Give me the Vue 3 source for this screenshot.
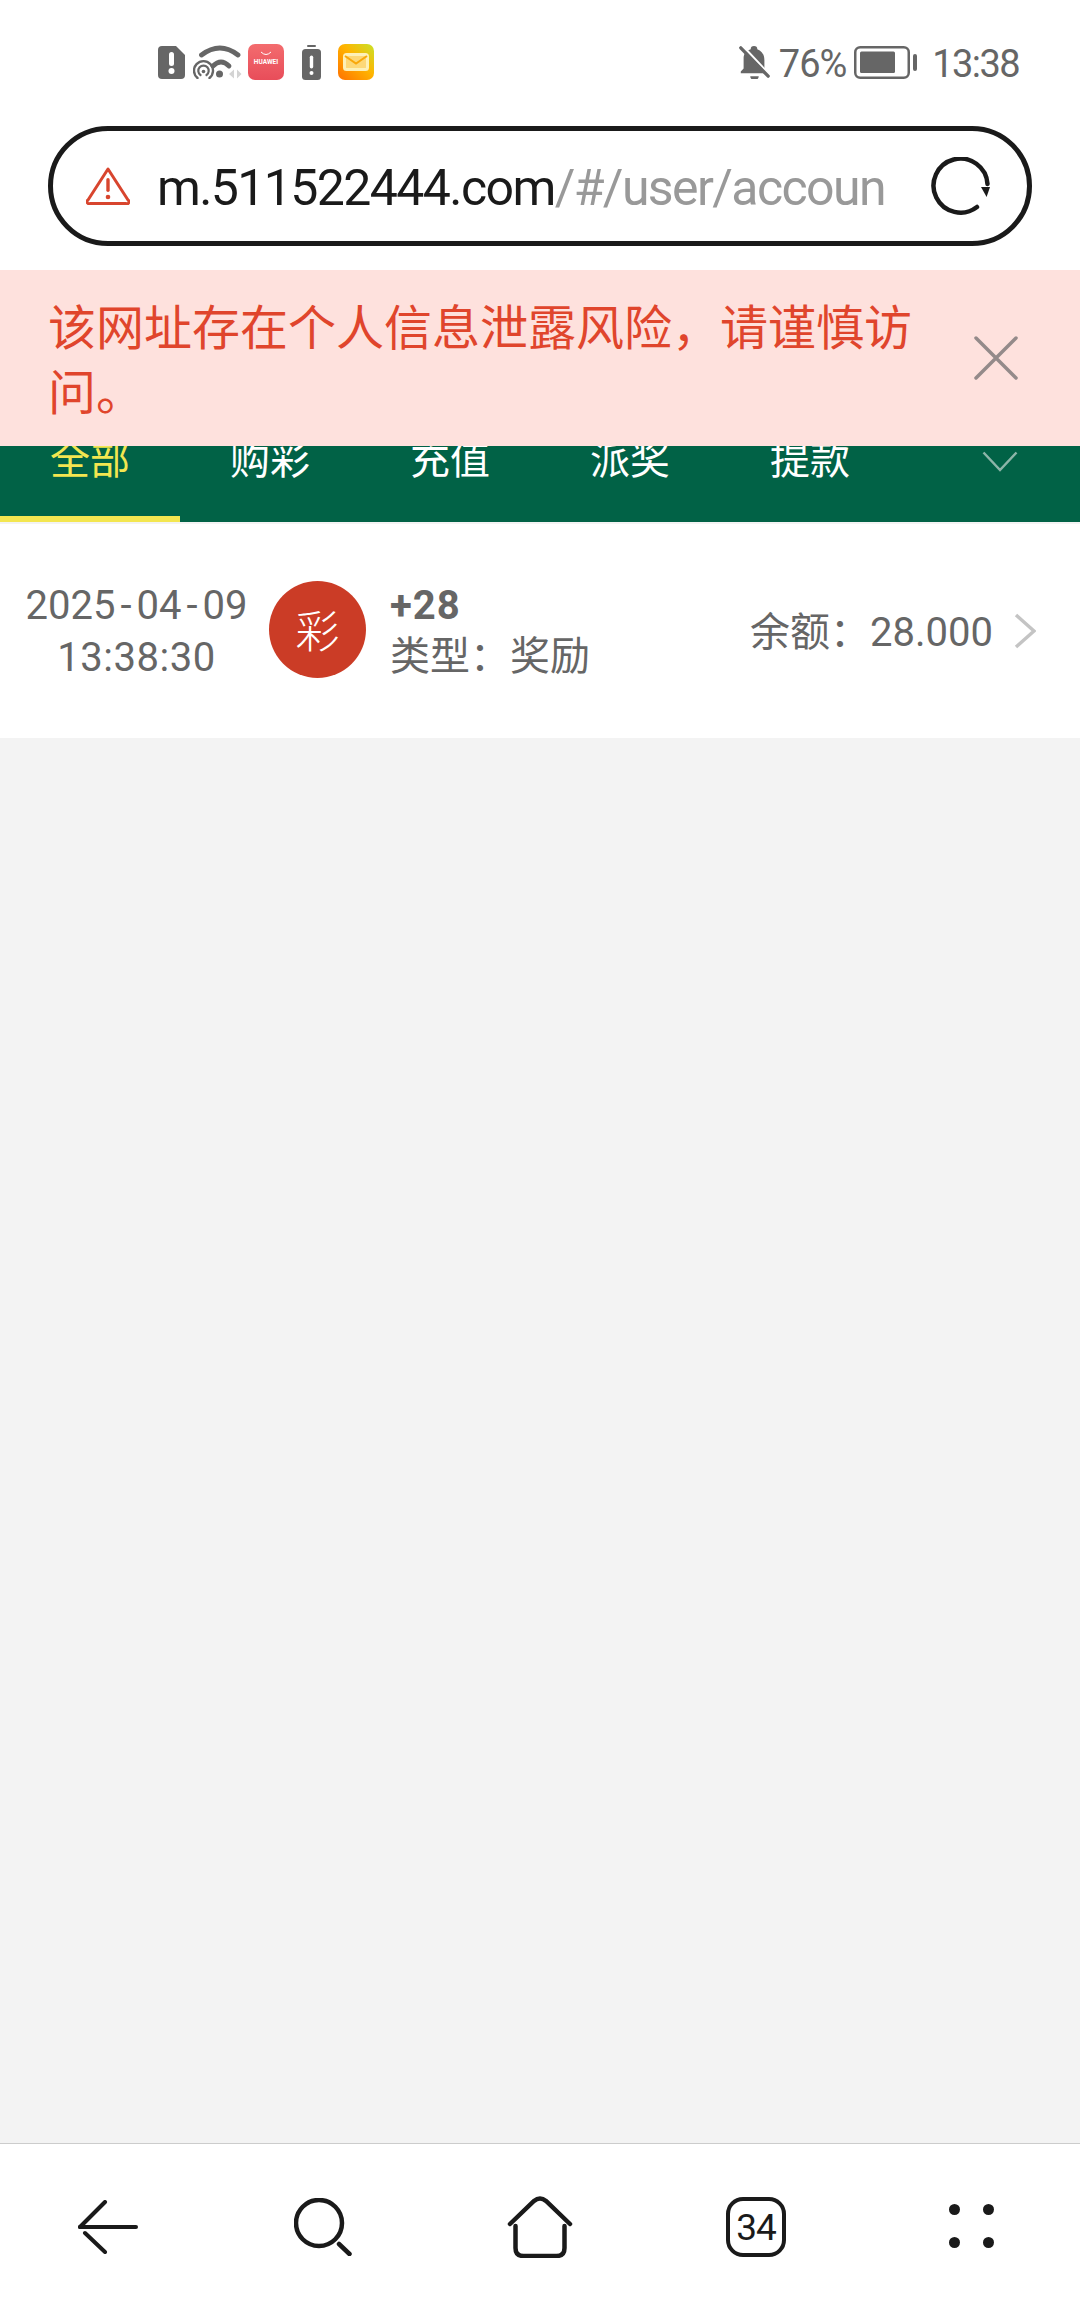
<template>
  <div class="phone">
    <header class="status-bar">
      <div class="status-left">
        <svg class="ic-sim" viewBox="0 0 27 33" width="27" height="33">
          <path d="M4 0H18L27 9V29a4 4 0 0 1-4 4H4a4 4 0 0 1-4-4V4a4 4 0 0 1 4-4Z" fill="#666" />
          <rect x="11" y="6" width="5" height="14" rx="2.5" fill="#fff" />
          <circle cx="13.500" cy="25" r="3" fill="#fff" />
        </svg>
        <svg class="ic-wifi" viewBox="0 0 49 34" width="49" height="34">
          <g fill="none" stroke="#666" stroke-linecap="round">
            <path d="M8.500 10Q27 -4 45 10" stroke-width="4.800" />
            <path d="M20 21Q28 13 36 21" stroke-width="4.800" />
            <path d="M4.500 33A9.500 9.500 0 1 1 16.500 33" stroke-width="2.400" />
            <path d="M7.500 30A5.200 5.200 0 1 1 13.500 30" stroke-width="2.200" />
          </g>
          <circle cx="10.500" cy="26.500" r="1.800" fill="#666" />
          <circle cx="26.500" cy="29" r="3.500" fill="#666" />
          <path d="M36 29L41 24.500V33.500ZM44 24.500L48.500 29L44 33.500Z" fill="#d4d4d4" />
        </svg>
        <div class="ic-huawei">
          <svg viewBox="0 0 12 6" width="12" height="6">
            <path d="M1 1Q6 6 11 1" fill="none" stroke="#fff" stroke-width="1" />
          </svg>
          <span>HUAWEI</span>
        </div>
        <svg class="ic-batt" viewBox="0 0 19 35" width="19" height="35">
          <rect x="5" y="0" width="9" height="2" rx="1" fill="#666" />
          <rect x="0" y="4" width="19" height="31" rx="3.500" fill="#666" />
          <rect x="7.800" y="10.500" width="3.400" height="13" rx="1.700" fill="#fff" />
          <circle cx="9.500" cy="28" r="2" fill="#fff" />
        </svg>
        <div class="ic-mail">
          <svg viewBox="0 0 26 18" width="26" height="18">
            <rect x="1.500" y="1.500" width="23" height="15" rx="2" fill="#fdd878" stroke="#fdf0b8" stroke-width="3" />
            <path d="M2 3L13 10.500L24 3" fill="none" stroke="#f9a70a" stroke-width="2" />
          </svg>
        </div>
      </div>
      <div class="status-right">
        <svg class="ic-bell" viewBox="0 0 32 36" width="32" height="34">
          <path d="M16 1a3.500 3.500 0 0 1 3.500 3.500c5 2 7.500 6 7.500 11.500v9l3 3v2H2v-2l3-3V14c0-4 2-8 7.500-9.500A3.500 3.500 0 0 1 16 1Z" fill="#666" />
          <path d="M12 33h9a4.500 4.500 0 0 1-9 0Z" fill="#666" />
          <path d="M3 0L33 32" stroke="#fff" stroke-width="2.500" />
          <path d="M2 3L31 33" stroke="#666" stroke-width="3.500" stroke-linecap="round" />
        </svg>
        <span class="pct">76%</span>
        <svg class="ic-battery" viewBox="0 0 63 33" width="63" height="33">
          <rect x="1.250" y="1.250" width="53.500" height="30.500" rx="5" fill="none" stroke="#666" stroke-width="2.500" />
          <rect x="6" y="5.500" width="35" height="21.500" rx="1.500" fill="#666" />
          <rect x="59" y="8" width="4" height="17" rx="2" fill="#666" />
        </svg>
        <span class="clock">13:38</span>
      </div>
    </header>

    <div class="address-bar">
      <svg class="ic-warn" viewBox="0 0 44 38" width="44" height="38">
        <path d="M22 2L42 33a2 2 0 0 1-2 3.500H4a2 2 0 0 1-2-3.500Z" fill="none" stroke="#d8452e" stroke-width="3" stroke-linejoin="round" />
        <rect x="20.300" y="11" width="3.400" height="14" rx="1.700" fill="#d8452e" />
        <circle cx="22" cy="30" r="2.300" fill="#d8452e" />
      </svg>
      <div class="url"><span class="host">m.511522444.com</span><span class="path">/#/user/accoun</span></div>
      <svg class="ic-reload" viewBox="0 0 60 58" width="60" height="58">
        <path d="M46 50A27 27 0 1 1 56.500 27" fill="none" stroke="#1a1a1a" stroke-width="4.500" stroke-linecap="round" />
        <path d="M50 30H59L55.600 40Z" fill="#1a1a1a" />
      </svg>
    </div>

    <main class="content">
      <div class="banner">
        <p class="banner-text">该网址存在个人信息泄露风险，请谨慎访问。</p>
        <svg class="ic-close" viewBox="0 0 44 44" width="44" height="44">
          <path d="M2 2L42 42M42 2L2 42" stroke="#948a8a" stroke-width="3.500" stroke-linecap="round" />
        </svg>
      </div>

      <nav class="tabs">
        <div v-for="(tab, i) in tabs" :key="tab" class="tab" :class="{ active: i === 0 }">{{ tab }}</div>
        <div class="tab-more">
          <svg viewBox="0 0 36 21" width="36" height="21">
            <path d="M1.500 1.500L18 19L34.500 1.500" fill="none" stroke="#8cb5a8" stroke-width="2.500" />
          </svg>
        </div>
      </nav>

      <section class="record">
        <div class="when">
          <div>2025<span class="dash">-</span>04<span class="dash">-</span>09</div>
          <div class="time">13:38:30</div>
        </div>
        <div class="badge">彩</div>
        <div class="detail">
          <div class="amount">+28</div>
          <div class="kind">类型：奖励</div>
        </div>
        <div class="balance">余额：28.000</div>
        <svg class="ic-next" viewBox="0 0 22 36" width="22" height="36">
          <path d="M2 2L20 18L2 34" fill="none" stroke="#c4c4c4" stroke-width="3.500" />
        </svg>
      </section>
    </main>

    <footer class="toolbar">
      <svg viewBox="0 0 60 54" width="60" height="54">
        <g fill="none" stroke="#1a1a1a" stroke-width="4" stroke-linecap="round">
          <path d="M2 27H58" />
          <path d="M2 27L27 2" />
          <path d="M7 33L27 52" />
        </g>
      </svg>
      <svg viewBox="0 0 60 58" width="60" height="58">
        <g fill="none" stroke="#1a1a1a" stroke-width="4.500" stroke-linecap="round">
          <circle cx="25" cy="25" r="23" />
          <path d="M45 46L55.500 56" />
        </g>
      </svg>
      <svg viewBox="0 0 66 62" width="66" height="62">
        <g fill="none" stroke="#1a1a1a" stroke-width="4.500" stroke-linecap="round">
          <path d="M3 28L27 5Q33 0 39 5L63 28" />
          <path d="M8.500 30V52Q8.500 60 16.500 60H49.500Q57.500 60 57.500 52V30" />
        </g>
      </svg>
      <div class="tab-count">34</div>
      <div class="dots">
        <i v-for="n in 4" :key="n"></i>
      </div>
    </footer>
  </div>
</template>

<script setup>
const tabs = ['全部', '购彩', '充值', '派奖', '提款']
</script>

<style>
body {
  background: #fff;
}
</style>

<style scoped>
.phone {
  width: 1080px;
  height: 2310px;
  display: flex;
  flex-direction: column;
  background: #fff;
  overflow: hidden;
  font-family: Roboto, "Noto Sans CJK SC", sans-serif;
}

.status-bar {
  height: 124px;
  flex: none;
  display: flex;
  align-items: center;
  justify-content: space-between;
  padding: 0 61px 0 158px;
  box-sizing: border-box;
}

.status-left,
.status-right {
  display: flex;
  align-items: center;
}

.ic-wifi {
  margin-left: 8px;
}

.ic-huawei {
  width: 36px;
  height: 36px;
  margin-left: 6px;
  border-radius: 7px;
  background: linear-gradient(180deg, #f36c6e, #e84d5a);
  display: flex;
  flex-direction: column;
  align-items: center;
  padding-top: 7px;
  box-sizing: border-box;
  color: #fff;
  font-size: 6.500px;
  font-weight: 700;
  line-height: 10px;
}

.ic-batt {
  margin-left: 18px;
}

.ic-mail {
  width: 36px;
  height: 36px;
  margin-left: 17px;
  border-radius: 7px;
  background: linear-gradient(45deg, #ff7d00 10%, #ffb400 55%, #c9e22a 100%);
  display: flex;
  align-items: center;
  justify-content: center;
}

.pct,
.clock {
  font-size: 38px;
  line-height: 44px;
  padding-top: 3px;
  color: #666;
}

.pct {
  margin-left: 9px;
  letter-spacing: -1px;
}

.ic-battery {
  margin-left: 8px;
}

.clock {
  margin-left: 15px;
  letter-spacing: -1.600px;
}

.address-bar {
  flex: none;
  height: 120px;
  margin: 2px 48px 24px;
  padding: 0 36px 0 33px;
  box-sizing: border-box;
  border: 5px solid #1a1a1a;
  border-radius: 60px;
  display: flex;
  align-items: center;
}

.url {
  margin-left: 27px;
  padding-top: 4px;
  white-space: nowrap;
  font-size: 50px;
  line-height: 60px;
  letter-spacing: -1.600px;
}

.host {
  color: #1a1a1a;
}

.path {
  color: #999;
}

.ic-reload {
  margin-left: auto;
}

.content {
  flex: 1;
  position: relative;
  background: #f3f3f3;
}

.banner {
  position: absolute;
  left: 0;
  right: 0;
  top: 0;
  height: 176px;
  background: #fee1dd;
  z-index: 2;
  display: flex;
  align-items: flex-start;
  padding: 26px 62px 0 48px;
  box-sizing: border-box;
}

.banner-text {
  margin: 0;
  width: 880px;
  font-size: 48px;
  line-height: 65px;
  color: #e0452c;
}

.ic-close {
  margin-left: auto;
  margin-top: 40px;
}

.tabs {
  height: 252px;
  background: #016246;
  display: flex;
  align-items: flex-end;
}

.tab {
  width: 180px;
  height: 100px;
  box-sizing: border-box;
  text-align: center;
  font-size: 40px;
  line-height: 46px;
  padding-top: 16px;
  color: #fff;
}

.tab.active {
  color: #f3e650;
  border-bottom: 6px solid #f3e650;
}

.tab-more {
  flex: 1;
  align-self: flex-start;
  display: flex;
  justify-content: flex-end;
  padding: 181px 62px 0 0;
}

.record {
  height: 214px;
  margin-top: 2px;
  padding-bottom: 2px;
  box-sizing: border-box;
  background: #fff;
  display: flex;
  align-items: center;
  color: #666;
  font-size: 40px;
}

.when {
  width: 273px;
  padding-top: 3px;
  text-align: center;
  line-height: 52px;
}

.dash {
  margin: 0 5px;
}

.time {
  letter-spacing: 0.500px;
}

.badge {
  width: 97px;
  height: 97px;
  border-radius: 50%;
  background: #cb3c26;
  color: #fff;
  font-size: 44px;
  font-weight: 300;
  display: flex;
  align-items: center;
  justify-content: center;
  margin: -2px 0 0 -4px;
}

.detail {
  margin-left: 24px;
  padding-top: 2px;
  line-height: 51px;
}

.amount {
  font-weight: 700;
  letter-spacing: 1px;
}

.balance {
  margin-left: auto;
  margin-bottom: 2px;
}

.ic-next {
  margin: 2px 44px 0 21px;
}

.toolbar {
  flex: none;
  height: 167px;
  border-top: 1px solid #ccc;
  box-sizing: border-box;
  background: #fff;
  display: grid;
  grid-template-columns: repeat(5, 1fr);
  align-items: center;
  justify-items: center;
}

.tab-count {
  width: 60px;
  height: 60px;
  box-sizing: border-box;
  border: 4.500px solid #1a1a1a;
  border-radius: 17px;
  display: flex;
  align-items: center;
  justify-content: center;
  font-size: 37px;
  letter-spacing: -1px;
  color: #1a1a1a;
}

.dots {
  display: grid;
  grid-template-columns: 11px 11px;
  gap: 22px 23px;
  margin: 0 2px 2px 0;
}

.dots i {
  width: 11px;
  height: 11px;
  border-radius: 50%;
  background: #1a1a1a;
}
</style>
